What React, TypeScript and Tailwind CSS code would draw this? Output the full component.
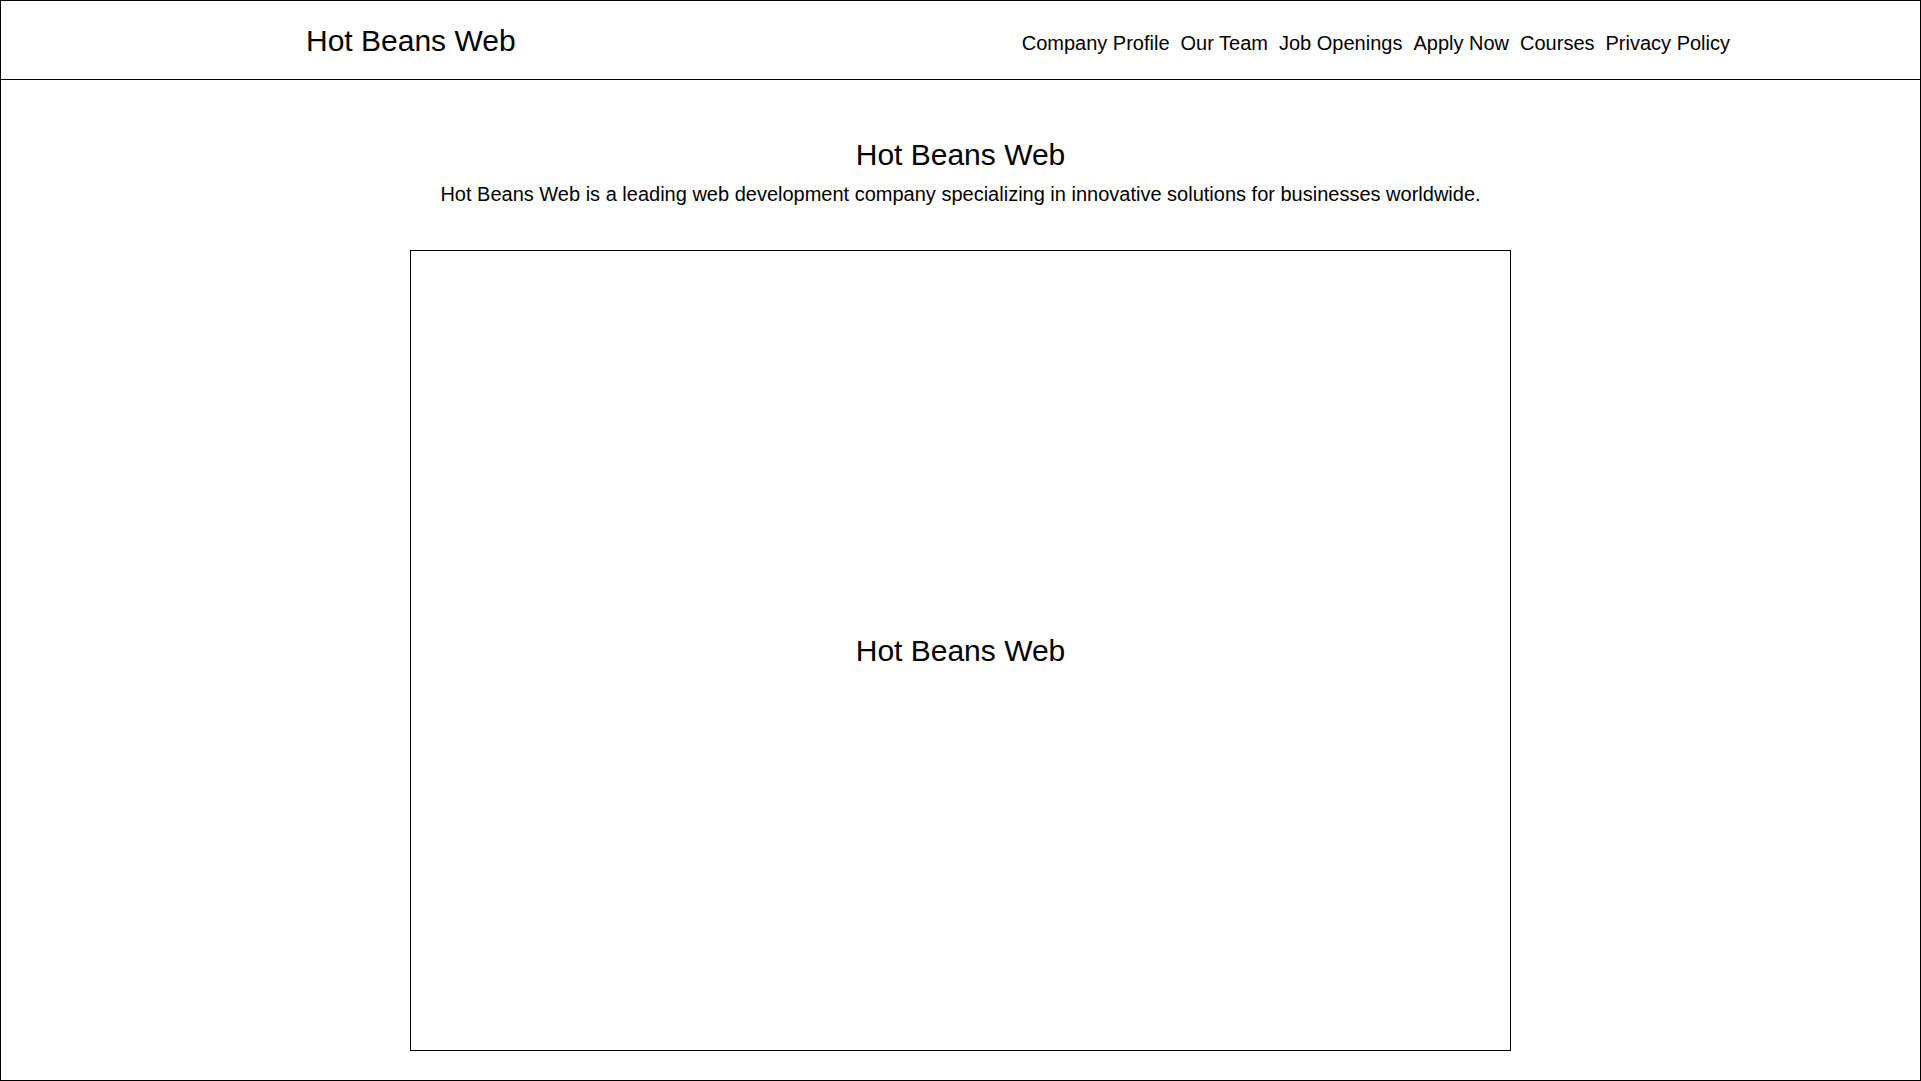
import React from 'react';

const navLinks = ['Company Profile', 'Our Team', 'Job Openings', 'Apply Now', 'Courses', 'Privacy Policy'];

const App: React.FC = () => {
  return (
    <div
      className="h-screen w-full border border-black bg-white text-black overflow-hidden"
      style={{ fontFamily: '"Liberation Sans", Arial, sans-serif' }}
    >
      {/* Header */}
      <header className="flex h-[79px] items-center border-b border-black pl-[305px] pr-[190px]">
        <div className="flex w-full items-baseline justify-between">
          <a href="#" className="translate-y-[1px] text-3xl">Hot Beans Web</a>
          <nav className="flex items-baseline gap-[11px] text-xl">
            {navLinks.map((link) => (
              <a key={link} href="#">
                {link}
              </a>
            ))}
          </nav>
        </div>
      </header>

      {/* Main */}
      <main className="flex flex-col items-center pt-[57px]">
        <h1 className="text-3xl">Hot Beans Web</h1>
        <p className="mt-[7px] text-xl">
          Hot Beans Web is a leading web development company specializing in innovative solutions for businesses worldwide.
        </p>
        <div className="mt-[42px] flex h-[801px] w-[1101px] items-center justify-center border border-black">
          <span className="text-3xl">Hot Beans Web</span>
        </div>
      </main>
    </div>
  );
};

export default App;
